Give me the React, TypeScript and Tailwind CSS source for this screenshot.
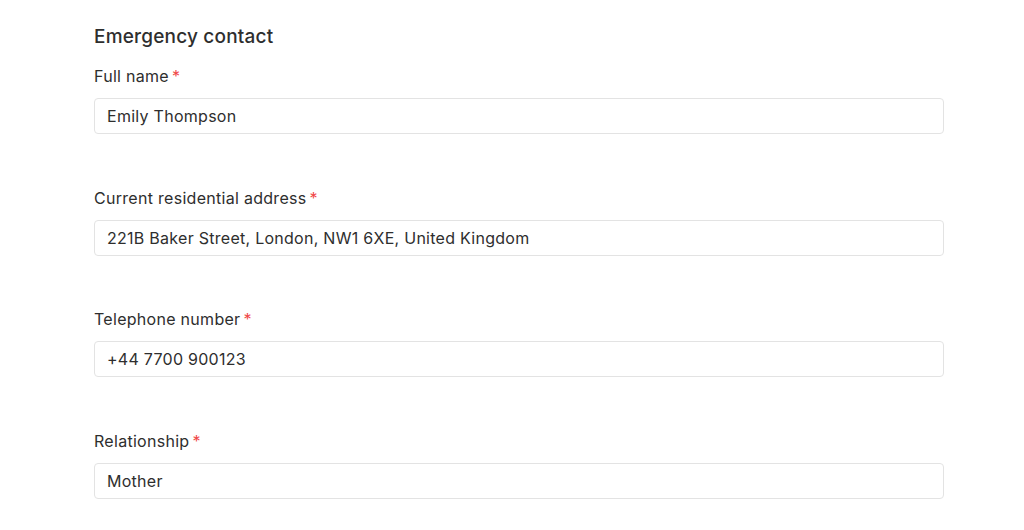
const fields = [
  { label: "Full name", value: "Emily Thompson" },
  { label: "Current residential address", value: "221B Baker Street, London, NW1 6XE, United Kingdom" },
  { label: "Telephone number", value: "+44 7700 900123" },
  { label: "Relationship", value: "Mother" },
]

export default function App() {
  return (
    <div className="w-[1024px] h-[530px] bg-white overflow-hidden font-['Inter',sans-serif] text-[#2e2e2e]">
      <div className="ml-[94px] w-[850px] pt-[23px]">
        <h2 className="text-[19px] leading-[28px] font-medium tracking-[0.01em] mb-[13px]">Emergency contact</h2>
        <div className="flex flex-col gap-[51.5px]">
          {fields.map((f) => (
            <div key={f.label} className="flex flex-col">
              <label className="text-[16px] leading-[24px] tracking-[0.018em] mb-[10px]">
                {f.label}
                <span className="text-[#f04747] ml-[3px]">*</span>
              </label>
              <div className="h-[36px] flex items-center px-[12px] border border-[#e3e3e3] rounded-[4px] text-[16px] tracking-[0.017em]">
                {f.value}
              </div>
            </div>
          ))}
        </div>
      </div>
    </div>
  )
}
